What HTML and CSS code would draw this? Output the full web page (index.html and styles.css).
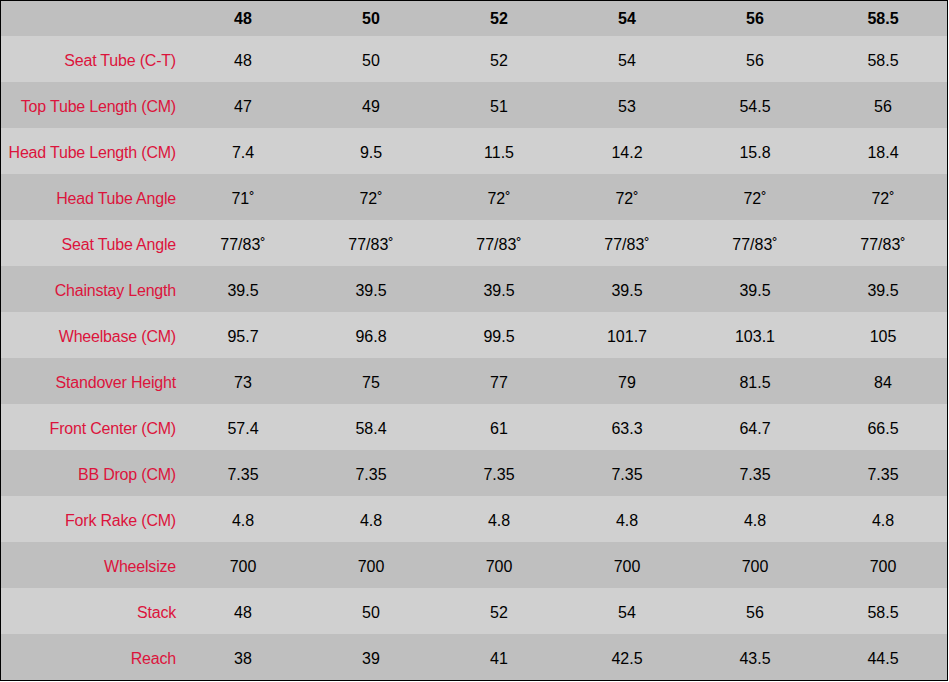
FILE: index.html
```html
<!DOCTYPE html>
<html>
<head>
<meta charset="utf-8">
<link rel="stylesheet" href="styles.css">
</head>
<body>
<table class="geo">
  <colgroup><col class="c-label"><col class="c-num"><col class="c-num"><col class="c-num"><col class="c-num"><col class="c-num"><col class="c-num"></colgroup>
  <thead>
    <tr class="head"><th></th><th>48</th><th>50</th><th>52</th><th>54</th><th>56</th><th>58.5</th></tr>
  </thead>
  <tbody>
    <tr><td class="label">Seat Tube (C-T)</td><td>48</td><td>50</td><td>52</td><td>54</td><td>56</td><td>58.5</td></tr>
    <tr><td class="label">Top Tube Length (CM)</td><td>47</td><td>49</td><td>51</td><td>53</td><td>54.5</td><td>56</td></tr>
    <tr><td class="label">Head Tube Length (CM)</td><td>7.4</td><td>9.5</td><td>11.5</td><td>14.2</td><td>15.8</td><td>18.4</td></tr>
    <tr><td class="label">Head Tube Angle</td><td>71˚</td><td>72˚</td><td>72˚</td><td>72˚</td><td>72˚</td><td>72˚</td></tr>
    <tr><td class="label">Seat Tube Angle</td><td>77/83˚</td><td>77/83˚</td><td>77/83˚</td><td>77/83˚</td><td>77/83˚</td><td>77/83˚</td></tr>
    <tr><td class="label">Chainstay Length</td><td>39.5</td><td>39.5</td><td>39.5</td><td>39.5</td><td>39.5</td><td>39.5</td></tr>
    <tr><td class="label">Wheelbase (CM)</td><td>95.7</td><td>96.8</td><td>99.5</td><td>101.7</td><td>103.1</td><td>105</td></tr>
    <tr><td class="label">Standover Height</td><td>73</td><td>75</td><td>77</td><td>79</td><td>81.5</td><td>84</td></tr>
    <tr><td class="label">Front Center (CM)</td><td>57.4</td><td>58.4</td><td>61</td><td>63.3</td><td>64.7</td><td>66.5</td></tr>
    <tr><td class="label">BB Drop (CM)</td><td>7.35</td><td>7.35</td><td>7.35</td><td>7.35</td><td>7.35</td><td>7.35</td></tr>
    <tr><td class="label">Fork Rake (CM)</td><td>4.8</td><td>4.8</td><td>4.8</td><td>4.8</td><td>4.8</td><td>4.8</td></tr>
    <tr><td class="label">Wheelsize</td><td>700</td><td>700</td><td>700</td><td>700</td><td>700</td><td>700</td></tr>
    <tr><td class="label">Stack</td><td>48</td><td>50</td><td>52</td><td>54</td><td>56</td><td>58.5</td></tr>
    <tr><td class="label">Reach</td><td>38</td><td>39</td><td>41</td><td>42.5</td><td>43.5</td><td>44.5</td></tr>
  </tbody>
</table>
</body>
</html>
```
FILE: styles.css
```css
html, body {
  margin: 0;
  padding: 0;
  background: #ffffff;
}
.geo {
  border-collapse: separate;
  border-spacing: 0;
  border: 1px solid #000000;
  width: 948px;
  table-layout: fixed;
  font-family: "Liberation Sans", Arial, sans-serif;
  font-size: 16px;
  line-height: 18px;
  color: #000000;
}
.c-label { width: 178px; }
.c-num { width: 128px; }
.geo th, .geo td {
  padding: 0;
  text-align: center;
  vertical-align: middle;
}
.head {
  background: #bfbfbf;
}
.head th {
  height: 35px;
  font-weight: bold;
  padding-top: 0;
  box-sizing: border-box;
}
.geo tbody td {
  height: 46px;
  padding-top: 4px;
  box-sizing: border-box;
}
.geo tbody tr:nth-child(odd) {
  background: #d0d0d0;
}
.geo tbody tr:nth-child(even) {
  background: #bfbfbf;
}
.geo td.label {
  text-align: right;
  color: #dc143c;
  padding-right: 3px;
  letter-spacing: -0.2px;
}
```
